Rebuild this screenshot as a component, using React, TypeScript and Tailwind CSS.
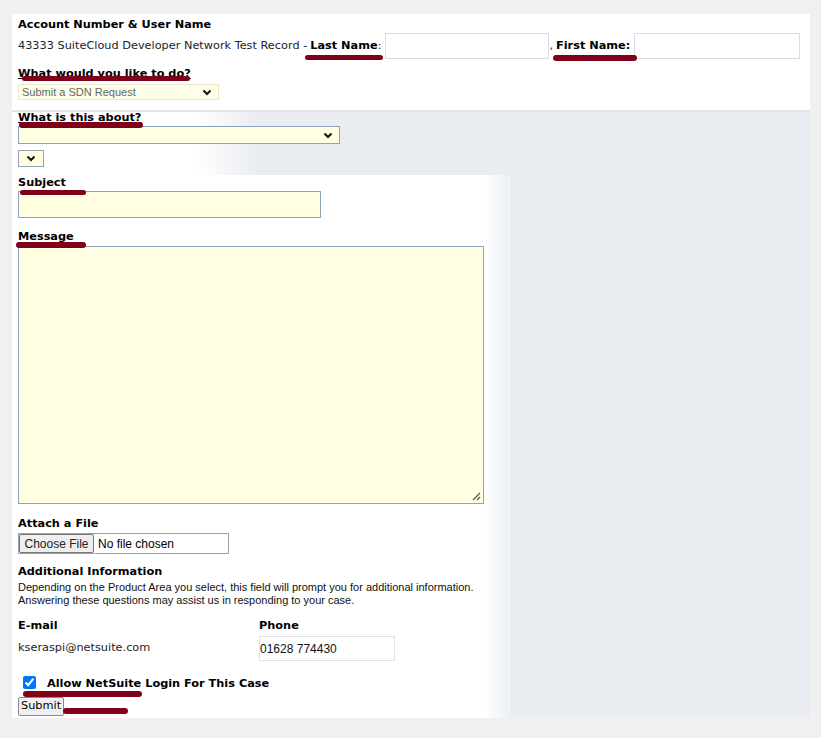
const Chevron = ({ className = '' }: { className?: string }) => (
  <svg width="10" height="7" viewBox="0 0 10 7" className={className}>
    <path d="M1.5 1.5 5 5l3.5-3.5" fill="none" stroke="#111" strokeWidth="2" />
  </svg>
)

const Mark = ({ className }: { className: string }) => (
  <div className={`absolute rounded-full bg-[#80001a] ${className}`} />
)

const label = 'font-["DejaVu_Sans",Verdana,sans-serif] text-[11.3px] font-bold text-black leading-[14px]'

const App = () => {
  return (
    <div className="relative min-h-screen bg-[#f0f0f0] pt-[14px] pl-[12px] pb-[20px]">
      <div className="flex h-[704px] w-[798px] flex-col bg-white">
        {/* top section */}
        <div className="h-[96px] shrink-0 px-[6px] pt-[4px]">
          <div className={`${label} h-[16px]`}>Account Number &amp; User Name</div>
          <div className="mt-[-1px] flex h-[26px] items-center font-['DejaVu_Sans',Verdana,sans-serif] text-[11.3px] text-[#222]">
            <span>43333 SuiteCloud Developer Network Test Record - </span>
            <span className="ml-[3px] font-bold text-black">Last Name</span>
            <span>:</span>
            <div className="ml-[4px] h-[26px] w-[164px] border border-[#d9dde3] bg-white" />
            <span>,</span>
            <span className="ml-[3px] font-bold text-black">First Name:</span>
            <div className="ml-[4px] h-[26px] w-[166px] border border-[#d9dde3] bg-white" />
          </div>
          <div className={`${label} mt-[8px] h-[16px] underline`}>What would you like to do?</div>
          <div className="mt-[1px] flex h-[16px] w-[201px] items-center justify-between border border-[#ebe9cc] bg-[#fdfde8] pl-[3px] pr-[6px] font-['Liberation_Sans',Arial,sans-serif] text-[11px] text-[#666]">
            <span>Submit a SDN Request</span>
            <Chevron />
          </div>
        </div>

        {/* lower area */}
        <div className="flex min-h-0 flex-1 flex-col border-t-2 border-[#e2e4e7] bg-[#e9ecf1]">
          <div className="h-[63px] shrink-0 bg-[linear-gradient(to_right,#ffffff_23%,#e9ecf1_31%)] px-[6px]">
            <div className={`${label} mt-[-1px] underline`}>What is this about?</div>
            <div className="mt-[1px] flex h-[18px] w-[322px] items-center justify-end border border-[#8fa4bb] bg-[#fffee0] pr-[6px]">
              <Chevron />
            </div>
            <div className="mt-[6px] flex h-[17px] w-[26px] items-center justify-center border border-[#8fa4bb] bg-[#fffee0]">
              <Chevron />
            </div>
          </div>

          <div className="flex flex-1">
            <div className="w-[498px] border-r border-[#f4f5f7] bg-[linear-gradient(to_right,#ffffff_95%,#edf0f3)] px-[6px]">
              <div className={`${label} pt-[1px]`}>Subject</div>
              <div className="mt-[1px] h-[27px] w-[303px] border border-[#8fa4bb] bg-[#fffee0]" />

              <div className={`${label} mt-[12px]`}>Message</div>
              <div className="relative mt-[2px] h-[258px] w-[466px] border border-[#8fa4bb] bg-[#fffee0]">
                <svg width="9" height="9" viewBox="0 0 9 9" className="absolute bottom-[2px] right-[2px]">
                  <path d="M8 1 1 8M8 5 5 8" stroke="#555" strokeWidth="1.2" />
                </svg>
              </div>

              <div className={`${label} mt-[13px]`}>Attach a File</div>
              <div className="mt-[2px] flex h-[21px] w-[211px] items-center border border-[#8fa4bb] bg-white font-['Liberation_Sans',Arial,sans-serif] text-[12px] text-black">
                <div className="flex h-[19px] w-[75px] items-center justify-center rounded-[2px] border border-[#767676] bg-[#efefef] text-[#222]">
                  Choose File
                </div>
                <span className="ml-[4px]">No file chosen</span>
              </div>

              <div className={`${label} mt-[11px]`}>Additional Information</div>
              <p className="mt-[2px] font-['Liberation_Sans',Arial,sans-serif] text-[11px] leading-[13px] text-[#111]">
                Depending on the Product Area you select, this field will prompt you for additional information.
                <br />
                Answering these questions may assist us in responding to your case.
              </p>

              <div className="mt-[12px] flex">
                <div className="w-[241px]">
                  <div className={label}>E-mail</div>
                  <div className="flex h-[25px] items-center pt-[6px] font-['DejaVu_Sans',Verdana,sans-serif] text-[11.3px] text-[#222]">
                    kseraspi@netsuite.com
                  </div>
                </div>
                <div>
                  <div className={label}>Phone</div>
                  <div className="mt-[3px] flex h-[25px] w-[136px] items-center border border-[#dfe3e8] bg-white font-['Liberation_Sans',Arial,sans-serif] text-[12px] text-[#111]">
                    01628 774430
                  </div>
                </div>
              </div>

              <div className="mt-[13px] flex items-center pl-[5px]">
                <input type="checkbox" checked readOnly className="m-0 h-[13px] w-[13px] accent-[#0075ff]" />
                <span className={`${label} ml-[11px] mt-[3px]`}>Allow NetSuite Login For This Case</span>
              </div>
              <button className="mt-[6px] flex h-[19px] items-center rounded-[2px] border border-[#8a8a8a] bg-[#efefef] px-[2px] font-['DejaVu_Sans',Verdana,sans-serif] text-[11.3px] text-black">
                Submit
              </button>
            </div>
            <div className="flex-1" />
          </div>
        </div>
      </div>

      {/* annotation strokes */}
      <Mark className="left-[305px] top-[55px] h-[5px] w-[78px]" />
      <Mark className="left-[553px] top-[55px] h-[6px] w-[84px]" />
      <Mark className="left-[22px] top-[76px] h-[5px] w-[168px]" />
      <Mark className="left-[19px] top-[122px] h-[6px] w-[124px]" />
      <Mark className="left-[20px] top-[190px] h-[5px] w-[66px]" />
      <Mark className="left-[16px] top-[242px] h-[6px] w-[70px]" />
      <Mark className="left-[23px] top-[691px] h-[6px] w-[119px]" />
      <Mark className="left-[63px] top-[708px] h-[6px] w-[65px]" />
    </div>
  )
}

export default App
